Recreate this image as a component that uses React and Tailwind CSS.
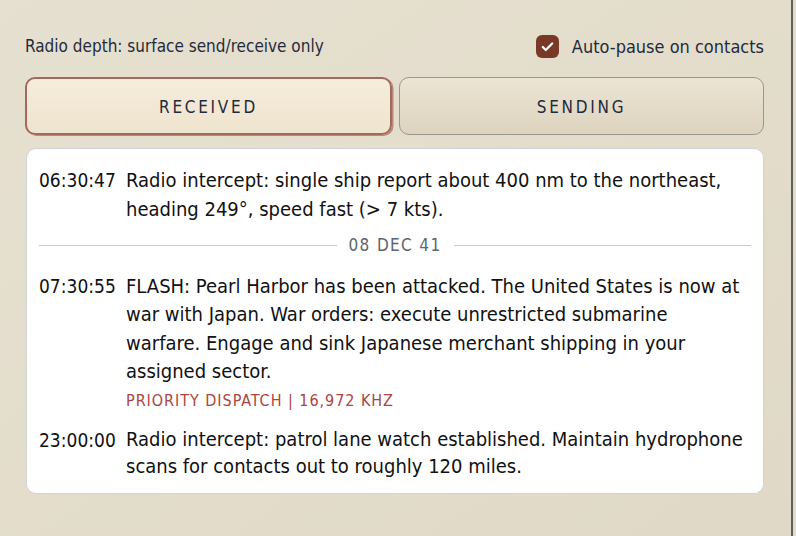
import React, { useState } from "react";

const entries = [
  {
    time: "06:30:47",
    text: "Radio intercept: single ship report about 400 nm to the northeast, heading 249°, speed fast (> 7 kts).",
  },
  { divider: "08 DEC 41" },
  {
    time: "07:30:55",
    text: "FLASH: Pearl Harbor has been attacked. The United States is now at war with Japan. War orders: execute unrestricted submarine warfare. Engage and sink Japanese merchant shipping in your assigned sector.",
    meta: "PRIORITY DISPATCH | 16,972 KHZ",
  },
  {
    time: "23:00:00",
    text: "Radio intercept: patrol lane watch established. Maintain hydrophone scans for contacts out to roughly 120 miles.",
  },
];

export default function App() {
  const [tab, setTab] = useState("received");
  const [autoPause, setAutoPause] = useState(true);

  const activeTab =
    "h-[58px] flex-1 rounded-[10px] border-2 border-[#a3695a] bg-gradient-to-b from-[#f5ecdb] to-[#efe4cf] pt-[3px] text-[17px] tracking-[0.16em] text-[#1f2b3b] shadow-[1.5px_1px_0_#b88a7a]";
  const idleTab =
    "h-[58px] flex-1 rounded-[10px] border-[1.5px] border-[#9b978d] bg-gradient-to-b from-[#ece5d4] to-[#ddd3bf] pt-[3px] text-[17px] tracking-[0.16em] text-[#1f2b3b]";

  return (
    <div
      className="flex h-[536px] w-[796px] bg-[#e2dccb]"
      style={{ fontFamily: '"Liberation Sans Narrow", "DejaVu Sans Condensed", "Liberation Sans", sans-serif' }}
    >
      <div className="flex w-[793px] flex-col border-r-2 border-[#5f5f5f] bg-gradient-to-br from-[#e6e0d0] to-[#e0d9c7] px-[25px] pt-[33px]">
        {/* Header row */}
        <div className="flex items-center justify-between pr-[2px]">
          <span className="text-[17px] text-[#1f2b3b]">Radio depth: surface send/receive only</span>
          <label className="flex cursor-pointer items-center gap-[13px]">
            <button
              onClick={() => setAutoPause(!autoPause)}
              className="flex h-[23px] w-[23px] items-center justify-center rounded-[6px] bg-[#7a3926]"
            >
              {autoPause && (
                <svg width="15" height="15" viewBox="0 0 16 16" fill="none">
                  <path d="M3 8.5l3.2 3.2L13 4.8" stroke="white" strokeWidth="2.4" strokeLinecap="round" strokeLinejoin="round" />
                </svg>
              )}
            </button>
            <span className="text-[18px] text-[#1f2b3b]">Auto-pause on contacts</span>
          </label>
        </div>

        {/* Tabs */}
        <div className="mt-[17px] flex gap-[7px] pr-[2px]">
          <button onClick={() => setTab("received")} className={tab === "received" ? activeTab : idleTab}>
            RECEIVED
          </button>
          <button onClick={() => setTab("sending")} className={tab === "sending" ? activeTab : idleTab}>
            SENDING
          </button>
        </div>

        {/* Log */}
        <div className="ml-px mr-[2px] mt-[13px] rounded-[10px] border border-[#d0d4d9] bg-white px-[12px] pb-[12px] pt-[17px]">
          {entries.map((e, i) =>
            e.divider ? (
              <div key={i} className="mb-[13px] mt-[10px] flex items-center gap-[12px]">
                <div className="h-px flex-1 bg-[#c6cbd0]" />
                <span className="text-[17px] tracking-[0.08em] text-[#5b6570]">{e.divider}</span>
                <div className="h-px flex-1 bg-[#c6cbd0]" />
              </div>
            ) : (
              <div key={i} className="mb-[10px] flex gap-[12px] last:mb-0">
                <span className="w-[75px] shrink-0 text-[19px] leading-[28px] text-[#111]">{e.time}</span>
                <div className="w-[618px]">
                  <p className={i === entries.length - 1 ? "text-[20px] leading-[27.5px] text-[#111]" : "text-[20px] leading-[28.5px] text-[#111]"}>
                    {e.text}
                  </p>
                  {e.meta && (
                    <p className="text-[16px] leading-[30px] tracking-[0.06em] text-[#ab4541]">{e.meta}</p>
                  )}
                </div>
              </div>
            )
          )}
        </div>
      </div>
    </div>
  );
}
